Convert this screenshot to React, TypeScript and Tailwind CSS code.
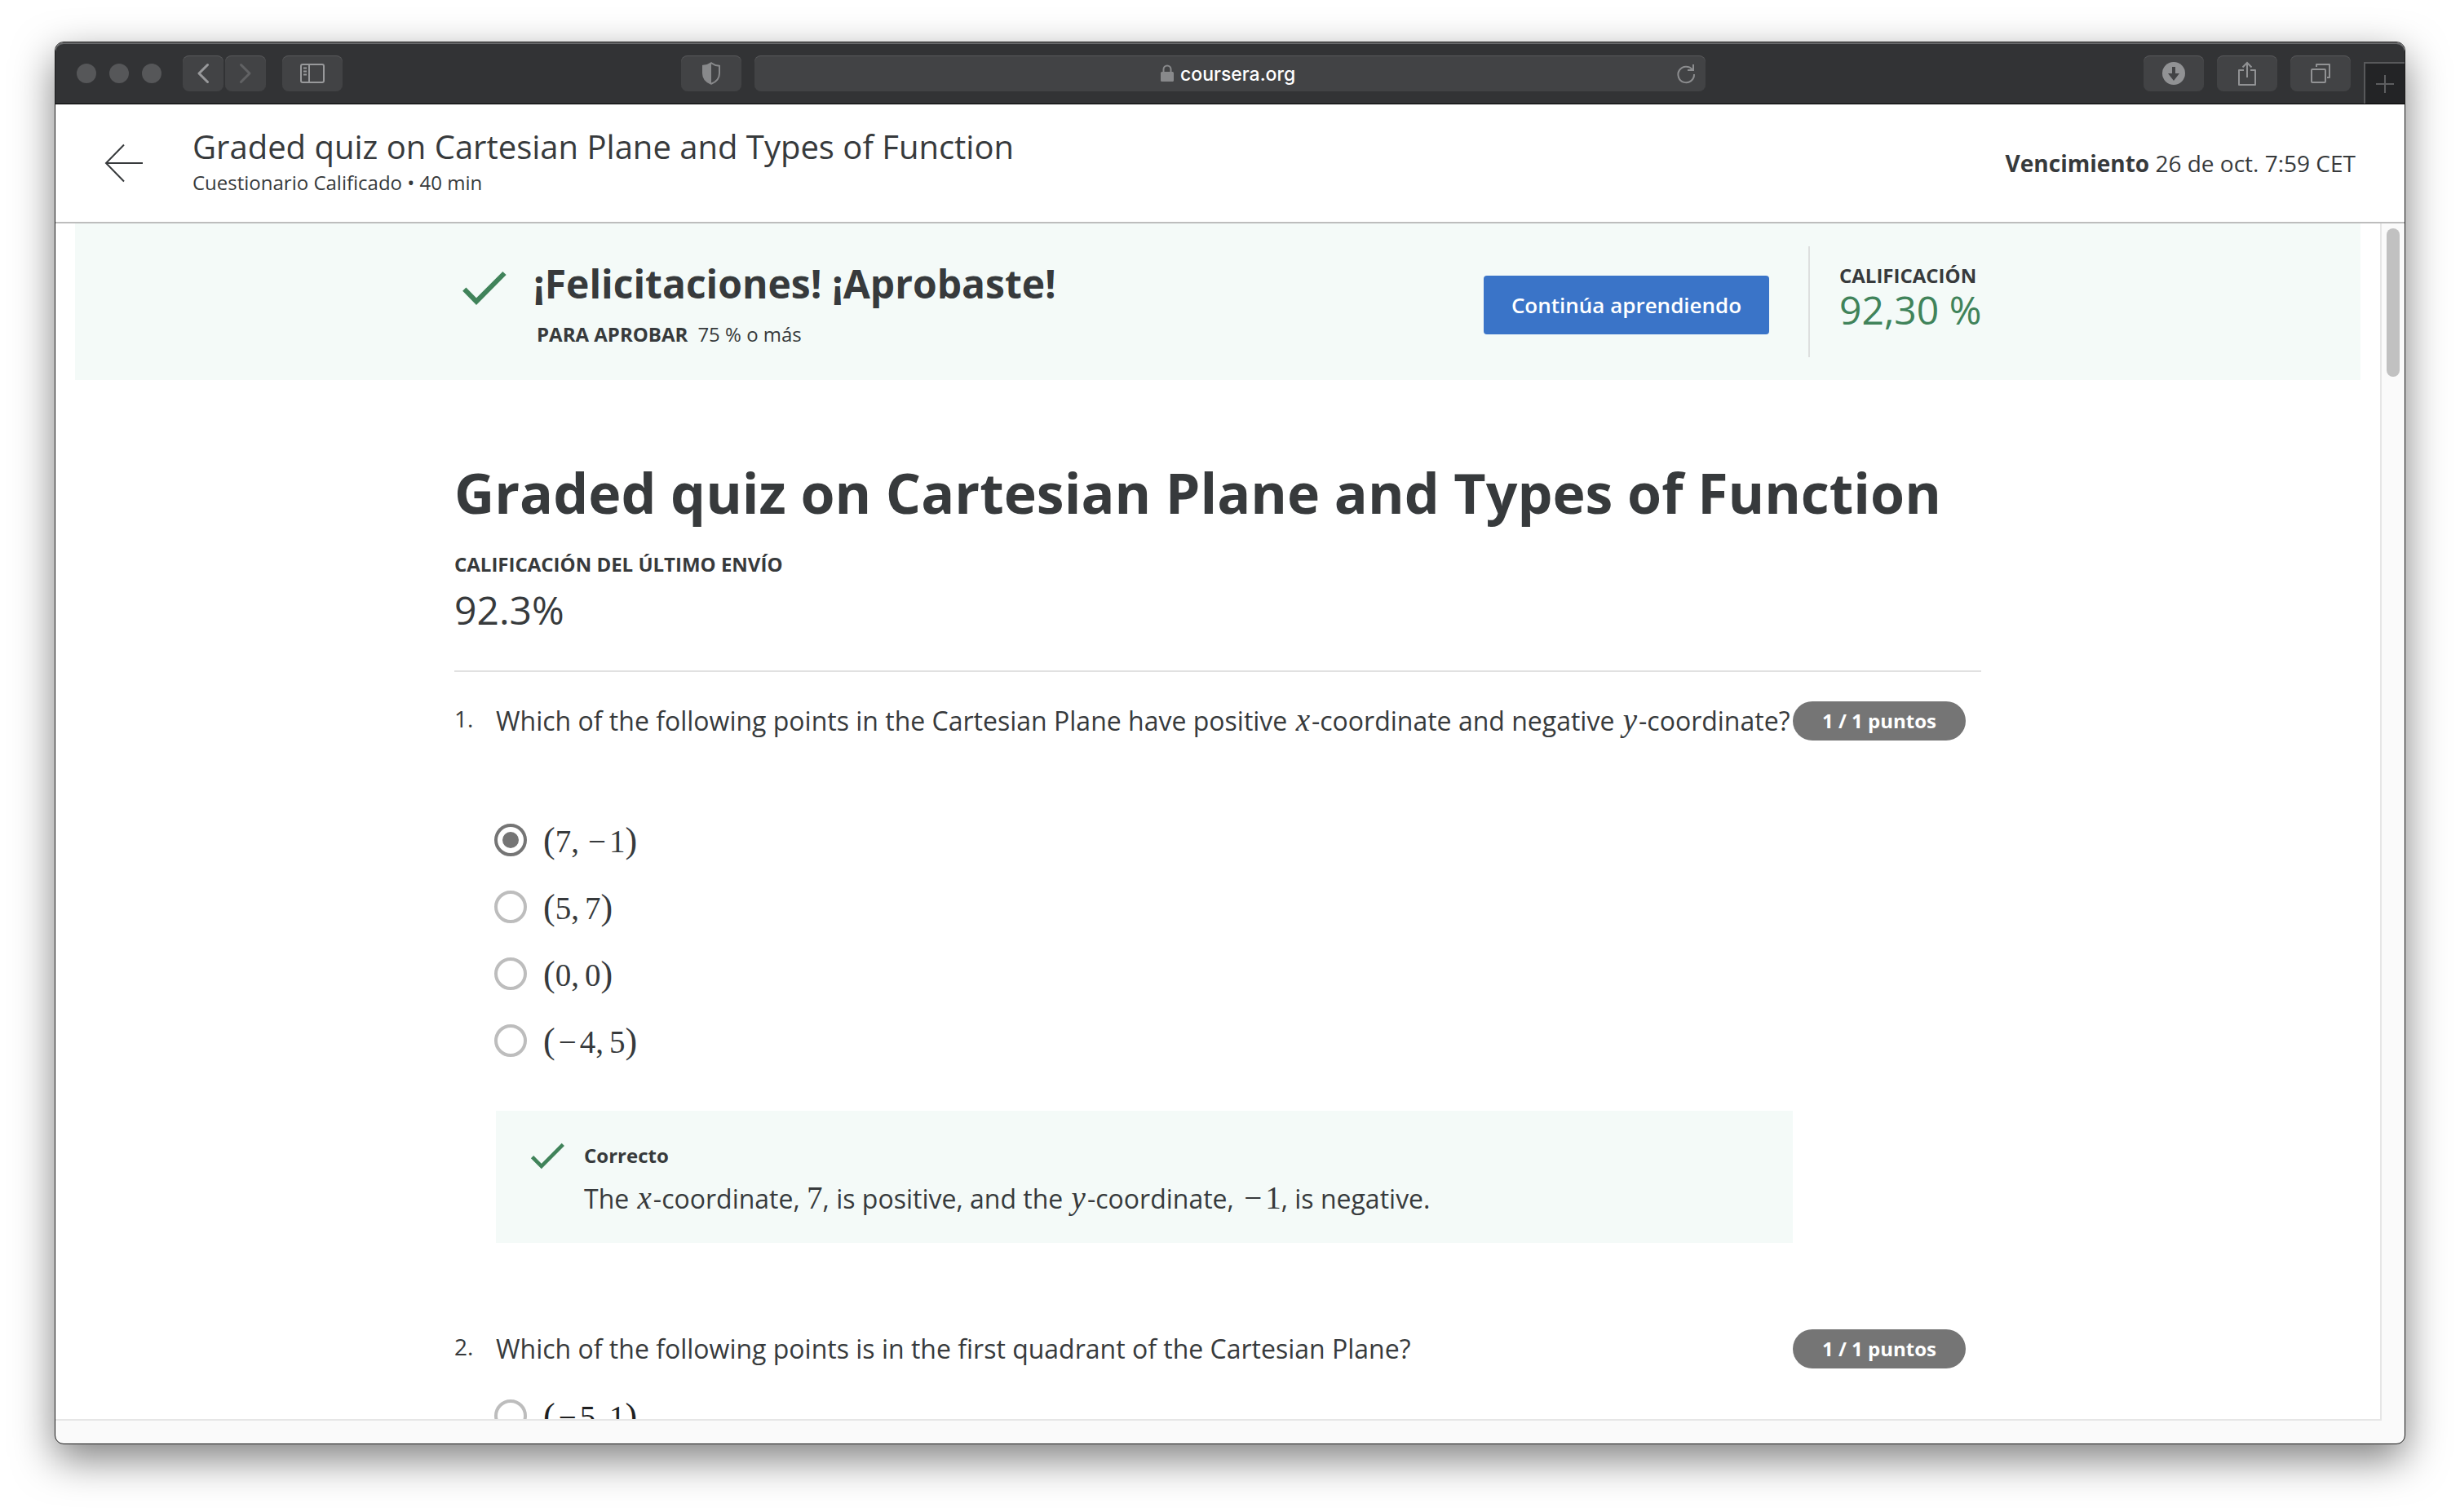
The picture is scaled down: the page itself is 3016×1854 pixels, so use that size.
import type { ReactNode } from "react";

function ToolbarButton({ label, wide = true, children }: { label: string; wide?: boolean; children: ReactNode }) {
  return (
    <button
      type="button"
      aria-label={label}
      className={`flex h-11 shrink-0 items-center justify-center rounded-lg bg-[#424345] shadow-[inset_0_1px_0_#58595b] ${
        wide ? "w-[74px]" : "w-[50px]"
      }`}
    >
      {children}
    </button>
  );
}

function BrowserToolbar() {
  return (
    <div className="grid h-19 shrink-0 grid-cols-[1fr_minmax(0,1166px)_1fr] items-start rounded-t-[10px] border-b border-black bg-[#323335] pt-4 shadow-[inset_0_2px_0_#68696b]">
      <div className="flex items-center pr-4 pl-[26px]">
        <div className="flex gap-4">
          <span className="size-6 rounded-full bg-[#565759]" />
          <span className="size-6 rounded-full bg-[#565759]" />
          <span className="size-6 rounded-full bg-[#565759]" />
        </div>
        <div className="ml-[26px] flex gap-0.5">
          <ToolbarButton label="Atrás" wide={false}>
            <svg width="16" height="26" viewBox="0 0 16 26" fill="none" stroke="#98999b" strokeWidth="3" strokeLinecap="round" strokeLinejoin="round">
              <path d="M13.500 2.500 3 13l10.500 10.500" />
            </svg>
          </ToolbarButton>
          <ToolbarButton label="Adelante" wide={false}>
            <svg width="16" height="26" viewBox="0 0 16 26" fill="none" stroke="#616264" strokeWidth="3" strokeLinecap="round" strokeLinejoin="round">
              <path d="M2.500 2.500 13 13 2.500 23.500" />
            </svg>
          </ToolbarButton>
        </div>
        <div className="ml-5">
          <ToolbarButton label="Barra lateral">
            <svg width="30" height="24" viewBox="0 0 30 24" fill="none" stroke="#98999b" strokeWidth="2">
              <rect x="1" y="1" width="28" height="22" rx="2" />
              <path d="M11 1v22M4 5.500h4M4 9.500h4M4 13.500h4" />
            </svg>
          </ToolbarButton>
        </div>
        <div className="ml-auto">
          <ToolbarButton label="Informe de privacidad">
            <svg width="24" height="28" viewBox="0 0 24 28">
              <path d="M12 1.200C9 3.500 5.500 4.500 2 4.800V14c0 6 4 10.500 10 12.800C18 24.500 22 20 22 14V4.800C18.500 4.500 15 3.500 12 1.200Z" fill="none" stroke="#88898b" strokeWidth="2" />
              <path d="M12 1.200C9 3.500 5.500 4.500 2 4.800V14c0 6 4 10.500 10 12.800Z" fill="#88898b" />
            </svg>
          </ToolbarButton>
        </div>
      </div>

      <div className="flex h-11 items-center rounded-lg bg-[#424345] px-3 shadow-[inset_0_1px_0_#58595b]">
        <div className="flex-1" />
        <div className="flex items-center gap-2">
          <svg width="16" height="22" viewBox="0 0 16 22">
            <path d="M3.500 10V6a4.500 4.500 0 0 1 9 0v4" fill="none" stroke="#88898b" strokeWidth="2" />
            <rect x="0" y="9" width="16" height="12" rx="1.500" fill="#88898b" />
          </svg>
          <input
            aria-label="Dirección"
            defaultValue="coursera.org"
            className="w-[146px] bg-transparent pt-0.5 font-['Inter',sans-serif] text-[23px] font-medium text-white outline-none"
          />
        </div>
        <div className="flex flex-1 justify-end">
          <button type="button" aria-label="Recargar">
            <svg width="24" height="28" viewBox="0 0 24 28" fill="none" stroke="#8c8d8f" strokeWidth="2">
              <path d="M20 9.500A9.800 9.800 0 1 0 22 15" />
              <path d="M21 3v7h-7" />
            </svg>
          </button>
        </div>
      </div>

      <div className="flex items-start justify-end">
        <div className="flex gap-4">
          <ToolbarButton label="Descargas">
            <svg width="28" height="28" viewBox="0 0 28 28">
              <circle cx="14" cy="14" r="14" fill="#919294" />
              <path d="M12 6h4v8h5l-7 9-7-9h5Z" fill="#424345" />
            </svg>
          </ToolbarButton>
          <ToolbarButton label="Compartir">
            <svg width="24" height="32" viewBox="0 0 24 32" fill="none" stroke="#919294" strokeWidth="2">
              <path d="M8 12H2v18h20V12h-6" strokeLinejoin="round" />
              <path d="M12 21V3M6.500 8.500 12 3l5.500 5.500" />
            </svg>
          </ToolbarButton>
          <ToolbarButton label="Ver pestañas">
            <svg width="26" height="26" viewBox="0 0 26 26" fill="none" stroke="#919294" strokeWidth="2" strokeLinejoin="round">
              <rect x="2" y="8" width="17" height="16" rx="1" />
              <path d="M8 5V2h16v16h-3" />
            </svg>
          </ToolbarButton>
        </div>
        <button
          type="button"
          aria-label="Pestaña nueva"
          className="mt-2 ml-4 flex h-[51px] w-[50px] items-center justify-center border-t-2 border-l-2 border-[#58595b] bg-[#232426]"
        >
          <svg width="22" height="22" viewBox="0 0 22 22" stroke="#5d5e60" strokeWidth="2">
            <path d="M11 0v22M0 11h22" />
          </svg>
        </button>
      </div>
    </div>
  );
}

function CourseHeader() {
  return (
    <header className="flex shrink-0 items-center border-b-2 border-[#bdbdbd] bg-white py-7 pr-15 pl-15">
      <a href="#curso" aria-label="Volver al curso" className="shrink-0">
        <svg width="48" height="48" viewBox="0 0 48 48" fill="none" stroke="#373a3c" strokeWidth="2">
          <path d="M47 24H2M24 1.500 2 24l22 22.500" />
        </svg>
      </a>
      <div className="ml-15 flex-1">
        <div className="text-[40px] leading-[48px]">Graded quiz on Cartesian Plane and Types of Function</div>
        <div className="text-2xl leading-10">Cuestionario Calificado • 40 min</div>
      </div>
      <p className="text-[28px] leading-10">
        <strong className="font-bold">Vencimiento</strong> 26 de oct. 7:59 CET
      </p>
    </header>
  );
}

function Check({ className }: { className: string }) {
  return (
    <svg viewBox="0 0 56 44" className={className} fill="none" stroke="#40835a" strokeWidth="6">
      <path d="M3.300 22.700 18 37.700 52.500 3" />
    </svg>
  );
}

function PassedBanner() {
  return (
    <section className="bg-[#f4faf8] py-7">
      <div className="mx-auto flex max-w-[1872px] items-start">
        <Check className="mt-[30px] ml-[9px] h-11 w-14 shrink-0" />
        <div className="mt-[14px] ml-8 flex-1">
          <h2 className="text-5xl leading-[64px] font-bold">¡Felicitaciones! ¡Aprobaste!</h2>
          <p className="mt-3 ml-1 text-2xl leading-9">
            <strong className="mr-3 font-bold">PARA APROBAR</strong>
            75 % o más
          </p>
        </div>
        <button
          type="button"
          className="mt-9 h-[72px] w-[350px] rounded-[4px] bg-[#3a74c8] text-[26px] font-semibold text-white"
        >
          Continúa aprendiendo
        </button>
        <div className="ml-12 h-[136px] w-[212px] border-l-2 border-[#dddfdf] pt-[18px] pl-9 whitespace-nowrap">
          <div className="text-2xl leading-9 font-bold">CALIFICACIÓN</div>
          <div className="text-5xl leading-[48px] text-[#40835a]">92,30 %</div>
        </div>
      </div>
    </section>
  );
}

function Var({ children }: { children: string }) {
  return <i className="mx-0.5 font-['Liberation_Serif',serif] text-[39px] leading-none">{children}</i>;
}

function MathText({ children }: { children: string }) {
  return (
    <span className="font-['Liberation_Serif',serif] text-[39px] leading-[42px] whitespace-pre">
      {[...children].map((ch, i) => {
        if (ch === "(" || ch === ")") return <span key={i} className="text-[44px] leading-[42px]">{ch}</span>;
        if (ch === "−") return <span key={i} className="mx-1">{ch}</span>;
        if (ch === ",") return <span key={i} className="mr-[7px]">{ch}</span>;
        return <span key={i}>{ch}</span>;
      })}
    </span>
  );
}

function Option({ name, value, checked = false }: { name: string; value: string; checked?: boolean }) {
  return (
    <label className="flex h-10 items-start gap-5">
      <input
        type="radio"
        name={name}
        defaultChecked={checked}
        className="size-10 shrink-0 appearance-none rounded-full border-4 border-[#bdbdbd] bg-clip-content p-1.5 checked:border-[#757575] checked:bg-[#757575]"
      />
      <MathText>{value}</MathText>
    </label>
  );
}

function QuestionRow({ number, children }: { number: number; children: ReactNode }) {
  return (
    <div className="flex items-start pr-[19px]">
      <span className="w-[51px] shrink-0 text-[28px] leading-[42px]">{number}.</span>
      <p className="flex-1 text-[32px] leading-[48px] whitespace-nowrap">{children}</p>
      <span className="flex h-12 w-[212px] shrink-0 items-center justify-center rounded-full bg-[#757575] text-2xl font-bold text-white">
        1 / 1 puntos
      </span>
    </div>
  );
}

export default function App() {
  return (
    <div className="flex h-screen flex-col bg-white px-[67px] pt-[51px] pb-[83px] font-['Open_Sans',sans-serif] text-[#373a3c]">
      <div className="flex min-h-0 flex-1 flex-col overflow-hidden rounded-[11px] border border-[#1c1c1c] bg-[#fafafa] shadow-[0_18px_50px_rgba(0,0,0,0.5)]">
        <BrowserToolbar />
        <CourseHeader />
        <div className="flex min-h-0 flex-1">
          <main className="min-w-0 flex-1 overflow-hidden bg-white px-6">
            <PassedBanner />
            <div className="mx-auto mt-[94px] max-w-[1872px]">
              <h1 className="text-[68px] leading-[88px] font-bold">Graded quiz on Cartesian Plane and Types of Function</h1>
              <div className="mt-[26px] text-2xl leading-9 font-bold">CALIFICACIÓN DEL ÚLTIMO ENVÍO</div>
              <div className="mt-2 text-5xl leading-[60px]">92.3%</div>
              <hr className="mt-11 mb-9 border-t-2 border-[#e1e1e1]" />

              <section>
                <QuestionRow number={1}>
                  Which of the following points in the Cartesian Plane have positive <Var>x</Var>-coordinate and negative{" "}
                  <Var>y</Var>-coordinate?
                </QuestionRow>
                <div className="mt-[102px] ml-[49px] flex flex-col gap-[42px]">
                  <Option name="q1" value="(7,−1)" checked />
                  <Option name="q1" value="(5,7)" />
                  <Option name="q1" value="(0,0)" />
                  <Option name="q1" value="(−4,5)" />
                </div>
                <div className="mt-[66px] mr-[231px] ml-[51px] flex items-start bg-[#f4faf8] pt-[37px] pb-[30px] pl-[42px]">
                  <Check className="mt-0.5 h-[34px] w-[43px] shrink-0" />
                  <div className="ml-[23px]">
                    <div className="text-2xl leading-9 font-bold">Correcto</div>
                    <p className="mt-[11px] text-[32px] leading-[48px] whitespace-nowrap">
                      The <Var>x</Var>-coordinate, <MathText>7</MathText>, is positive, and the <Var>y</Var>-coordinate,{" "}
                      <MathText>−1</MathText>, is negative.
                    </p>
                  </div>
                </div>
              </section>

              <section className="mt-[106px]">
                <QuestionRow number={2}>
                  Which of the following points is in the first quadrant of the Cartesian Plane?
                </QuestionRow>
                <div className="mt-[38px] ml-[49px] flex flex-col text-[#1f1f1f]">
                  <Option name="q2" value="(−5,1)" />
                </div>
              </section>
            </div>
          </main>
          <div className="w-[30px] shrink-0 border-l-2 border-[#e6e6e6] bg-[#fafafa] pt-1.5 pl-1.5">
            <div className="h-[182px] w-4 rounded-full bg-[#c1c1c1]" />
          </div>
        </div>
        <div className="h-[30px] shrink-0 pr-7">
          <div className="h-0.5 bg-[#e6e6e6]" />
        </div>
      </div>
    </div>
  );
}
